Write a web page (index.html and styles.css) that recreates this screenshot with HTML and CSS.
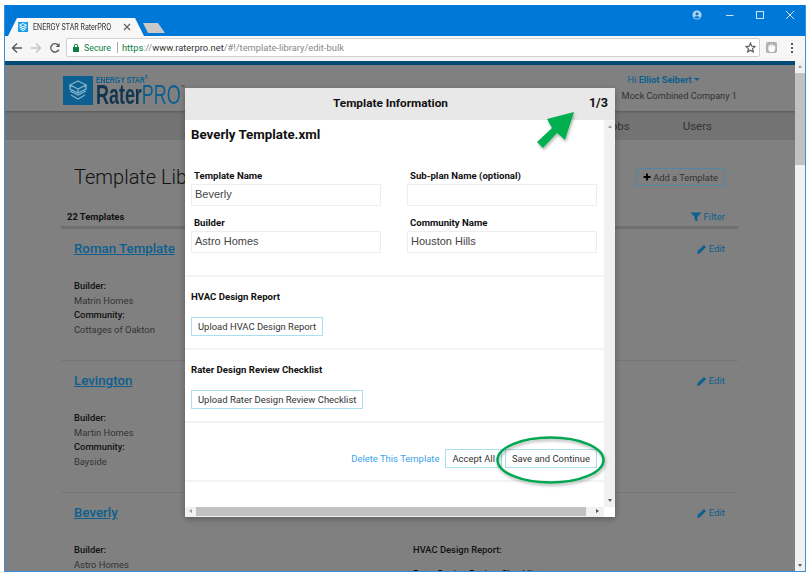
FILE: index.html
```html
<!DOCTYPE html>
<html lang="en">

<head>
    <meta charset="UTF-8">
    <meta name="viewport" content="width=device-width, initial-scale=1.0">
    <title>ENERGY STAR RaterPRO</title>
    <link rel="stylesheet" href="styles.css">
</head>

<body>
    <div class="window">
        <div class="titlebar">
            <div class="tab">
                <span class="favicon">
                    <svg width="10" height="10" viewBox="0 0 10 10"><path d="M5 1.5 8.5 3.2 5 5 1.5 3.2ZM1.5 5 5 6.8 8.5 5M2.5 7 5 8.6 7.5 7" fill="none" stroke="#fff" stroke-width="1"/></svg>
                </span>
                <span class="tab-title">ENERGY STAR RaterPRO</span>
                <span class="tab-close">
                    <svg width="8" height="8" viewBox="0 0 8 8"><path d="M1 1 7 7M7 1 1 7" stroke="#5f6368" stroke-width="1.2"/></svg>
                </span>
            </div>
            <div class="newtab"></div>
            <div class="win-controls">
                <svg class="win-user" width="10" height="10" viewBox="0 0 10 10"><circle cx="5" cy="5" r="4.5" fill="#b5d6f2"/><circle cx="5" cy="3.8" r="1.6" fill="#0078d7"/><path d="M2 7.6C3 5.9 7 5.9 8 7.6 7 9 3 9 2 7.6Z" fill="#0078d7"/></svg>
                <svg class="win-btn" width="10" height="10" viewBox="0 0 10 10"><path d="M1 5.5H8.5" stroke="#cfe5f7" stroke-width="1"/></svg>
                <svg class="win-btn" width="10" height="10" viewBox="0 0 10 10"><rect x="1.5" y="1.5" width="7" height="7" fill="none" stroke="#cfe5f7" stroke-width="1"/></svg>
                <svg class="win-btn" width="10" height="10" viewBox="0 0 10 10"><path d="M1 1 9 9M9 1 1 9" stroke="#cfe5f7" stroke-width="1"/></svg>
            </div>
        </div>

        <div class="toolbar">
            <svg class="nav-icon" width="12" height="12" viewBox="0 0 12 12"><path d="M11 6H2M6 1.5 1.5 6 6 10.5" fill="none" stroke="#5a5a5a" stroke-width="1.4"/></svg>
            <svg class="nav-icon" width="12" height="12" viewBox="0 0 12 12"><path d="M1 6H10M6 1.5 10.5 6 6 10.5" fill="none" stroke="#c4c4c4" stroke-width="1.4"/></svg>
            <svg class="nav-icon" width="12" height="12" viewBox="0 0 12 12"><path d="M9.8 7.6A4.2 4.2 0 1 1 9.4 3.4" fill="none" stroke="#5a5a5a" stroke-width="1.4"/><path d="M10.6 1V5H6.6Z" fill="#5a5a5a"/></svg>
            <div class="omnibox">
                <svg width="8" height="10" viewBox="0 0 8 10"><rect x="1" y="4" width="6" height="5" fill="#0b8043"/><path d="M2.3 4V3A1.7 1.7 0 0 1 5.7 3V4" fill="none" stroke="#0b8043" stroke-width="1"/></svg>
                <span class="secure">Secure</span>
                <span class="omni-sep"></span>
                <span class="url"><span class="url-https">https</span>://<span class="url-host">www.raterpro.net</span>/#!/template-library/edit-bulk</span>
                <svg class="omni-star" width="11" height="11" viewBox="0 0 12 12"><path d="M6 1.2 7.4 4.5 11 4.8 8.3 7.2 9.1 10.8 6 8.9 2.9 10.8 3.7 7.2 1 4.8 4.6 4.5Z" fill="none" stroke="#555" stroke-width="1.2"/></svg>
            </div>
            <span class="ext-icon">
                <svg width="8" height="9" viewBox="0 0 8 9"><path d="M1 4V2.5M2.6 4V1.5M4.2 4V1.5M5.8 4V2.3M1 4V6.5Q1 8.5 3.5 8.5 6.6 8.5 6.6 5.5V3" fill="#fff" stroke="#fff" stroke-width="1.2"/></svg>
            </span>
            <span class="menu-dots"><i></i><i></i><i></i></span>
        </div>

        <div class="viewport">
            <div class="page">
                <div class="page-stripe"></div>
                <div class="page-head">
                    <div class="logo">
                        <span class="logo-mark">
                            <svg width="30" height="29" viewBox="0 0 30 29"><path d="M15 5 23 9 15 13 7 9ZM7 9V13L15 17 23 13V9M7 15 15 19 23 15M8 19 15 23 22 19M15 13V17" fill="none" stroke="#7fb2cc" stroke-width="1.3"/></svg>
                        </span>
                        <span class="logo-text">
                            <span class="logo-small">ENERGY STAR<sup>®</sup></span>
                            <span class="logo-big">Rater<span class="logo-pro">PRO</span><sup>™</sup></span>
                        </span>
                    </div>
                    <div class="account">
                        <div class="account-name">Hi <b>Elliot Seibert</b><span class="caret"></span></div>
                        <div class="account-company">Mock Combined Company 1</div>
                    </div>
                </div>

                <div class="page-nav">
                    <span>Jobs</span>
                    <span>Users</span>
                </div>

                <div class="page-main">
                    <div class="title-row">
                        <h1>Template Library</h1>
                        <span class="add-btn">
                            <svg width="8" height="8" viewBox="0 0 8 8"><path d="M4 .5V7.5M.5 4H7.5" stroke="#000" stroke-width="1.8"/></svg>
                            Add a Template
                        </span>
                    </div>
                    <div class="count-row">
                        <b>22 Templates</b>
                        <span class="link-blue">
                            <svg width="12" height="10" viewBox="0 0 12 10"><path d="M.5 .5H11.5L7.3 5V9.5L4.7 8V5Z" fill="#0c5f8f"/></svg>
                            Filter
                        </span>
                    </div>

                    <div class="tpl">
                        <div class="tpl-head">
                            <a class="tpl-name">Roman Template</a>
                            <span class="link-blue"><svg class="pencil" width="10" height="10" viewBox="0 0 9 9"><path d="M0 9 .6 6.4 6.2 .8 8.2 2.8 2.6 8.4Z" fill="#0c5f8f"/></svg>Edit</span>
                        </div>
                        <div class="tpl-cols">
                            <div>
                                <div class="tpl-label">Builder:</div>
                                <div>Matrin Homes</div>
                                <div class="tpl-label">Community:</div>
                                <div>Cottages of Oakton</div>
                            </div>
                            <div>
                                <div class="tpl-label">HVAC Design Report:</div>
                            </div>
                        </div>
                    </div>

                    <div class="tpl">
                        <div class="tpl-head">
                            <a class="tpl-name">Levington</a>
                            <span class="link-blue"><svg class="pencil" width="10" height="10" viewBox="0 0 9 9"><path d="M0 9 .6 6.4 6.2 .8 8.2 2.8 2.6 8.4Z" fill="#0c5f8f"/></svg>Edit</span>
                        </div>
                        <div class="tpl-cols">
                            <div>
                                <div class="tpl-label">Builder:</div>
                                <div>Martin Homes</div>
                                <div class="tpl-label">Community:</div>
                                <div>Bayside</div>
                            </div>
                            <div>
                                <div class="tpl-label">HVAC Design Report:</div>
                            </div>
                        </div>
                    </div>

                    <div class="tpl">
                        <div class="tpl-head">
                            <a class="tpl-name">Beverly</a>
                            <span class="link-blue"><svg class="pencil" width="10" height="10" viewBox="0 0 9 9"><path d="M0 9 .6 6.4 6.2 .8 8.2 2.8 2.6 8.4Z" fill="#0c5f8f"/></svg>Edit</span>
                        </div>
                        <div class="tpl-cols">
                            <div>
                                <div class="tpl-label">Builder:</div>
                                <div>Astro Homes</div>
                            </div>
                            <div>
                                <div class="tpl-label">HVAC Design Report:</div>
                                <div class="tpl-label tpl-checklist">Rater Design Review Checklist</div>
                            </div>
                        </div>
                    </div>
                </div>

                <div class="modal">
                    <div class="modal-head">
                        <span class="modal-title">Template Information</span>
                        <span class="modal-step">1/3</span>
                    </div>
                    <div class="modal-scroll">
                        <div class="modal-body">
                            <section class="modal-section section-form">
                                <h2>Beverly Template.xml</h2>
                                <div class="form-grid">
                                    <div class="field">
                                        <label>Template Name</label>
                                        <div class="input">Beverly</div>
                                    </div>
                                    <div class="field">
                                        <label>Sub-plan Name (optional)</label>
                                        <div class="input"></div>
                                    </div>
                                    <div class="field">
                                        <label>Builder</label>
                                        <div class="input">Astro Homes</div>
                                    </div>
                                    <div class="field">
                                        <label>Community Name</label>
                                        <div class="input">Houston Hills</div>
                                    </div>
                                </div>
                            </section>
                            <section class="modal-section section-upload">
                                <h3>HVAC Design Report</h3>
                                <span class="btn">Upload HVAC Design Report</span>
                            </section>
                            <section class="modal-section section-upload">
                                <h3>Rater Design Review Checklist</h3>
                                <span class="btn">Upload Rater Design Review Checklist</span>
                            </section>
                            <section class="modal-section section-actions">
                                <a class="delete-link">Delete This Template</a>
                                <span class="btn">Accept All</span>
                                <span class="btn">Save and Continue</span>
                            </section>
                        </div>
                        <div class="modal-vbar">
                            <span class="arrow-up"></span>
                            <span class="arrow-down"></span>
                        </div>
                    </div>
                    <div class="modal-hbar">
                        <span class="arrow-left"></span>
                        <span class="hbar-thumb"></span>
                        <span class="arrow-right"></span>
                    </div>
                </div>
            </div>

            <div class="vscroll">
                <span class="arrow-up"></span>
                <span class="vscroll-thumb"></span>
                <span class="arrow-down"></span>
            </div>
        </div>
    </div>

    <svg class="annotations" width="810" height="576" viewBox="0 0 810 576">
        <defs>
            <filter id="soft" x="-20%" y="-20%" width="140%" height="140%">
                <feDropShadow dx="1" dy="2" stdDeviation="1.5" flood-color="#000" flood-opacity="0.3"/>
            </filter>
        </defs>
        <path d="M574 112 547 119 552 128 537 142 543 148 557 133 565 140Z" fill="#00b050" filter="url(#soft)"/>
        <ellipse cx="550.5" cy="460" rx="53" ry="22.5" fill="none" stroke="#00a651" stroke-width="2.5" filter="url(#soft)"/>
    </svg>
</body>

</html>
```

FILE: styles.css
```css
:root {
    --chrome-blue: #0078d7;
    --dim-bg: #808080;
    --dim-link: #0c5f8f;
    --dim-text: #333333;
    --btn-border: #a9dff0;
    --rule-color: #f3f3f3;
}

* {
    box-sizing: border-box;
}

body {
    font-family: 'Roboto', sans-serif;
    margin: 0;
    background-color: white;
    color: #222;
    overflow: hidden;
}

.window {
    width: 802px;
    height: 567px;
    margin: 5px 0 0 4px;
    border: 1px solid #3a8fd8;
    border-top: none;
    display: flex;
    flex-direction: column;
    overflow: hidden;
}

/* browser chrome */

.titlebar {
    height: 31px;
    flex: none;
    background-color: var(--chrome-blue);
    display: flex;
    align-items: flex-end;
    padding-left: 3px;
}

.tab {
    width: 136px;
    height: 18px;
    background-color: #f7f7f7;
    clip-path: polygon(0 100%, 9px 0, 127px 0, 100% 100%);
    display: flex;
    align-items: center;
    padding: 0 10px;
}

.favicon {
    width: 10px;
    height: 10px;
    background-color: #18a0e8;
    display: flex;
    flex: none;
}

.tab-title {
    width: 84px;
    font-size: 8.8px;
    color: #333;
    margin-left: 5px;
    white-space: nowrap;
    transform: scaleX(0.81);
    transform-origin: left;
}

.tab-close {
    display: flex;
    margin-left: auto;
    margin-right: 3px;
}

.newtab {
    width: 22px;
    height: 10px;
    margin: 0 0 3px -1px;
    background-color: #c8c8c8;
    clip-path: polygon(0 0, 15px 0, 100% 100%, 5px 100%);
}

.win-controls {
    margin-left: auto;
    align-self: flex-start;
    display: flex;
    align-items: center;
    padding: 5px 10px 0 0;
}

.win-user {
    margin-right: 3px;
}

.win-btn {
    margin-left: 20px;
}

.toolbar {
    height: 25px;
    flex: none;
    background-color: #f6f6f6;
    display: flex;
    align-items: center;
    padding: 0 0 2px 6px;
}

.nav-icon {
    margin-right: 7px;
    flex: none;
}

.omnibox {
    width: 694px;
    height: 19px;
    margin-left: -2px;
    background-color: white;
    border: 1px solid #d0d0d0;
    border-radius: 2px;
    display: flex;
    align-items: center;
    padding-left: 5px;
    font-size: 9.35px;
    color: #888;
}

.secure {
    font-size: 8.8px;
    color: #0b8043;
    margin-left: 4px;
}

.omni-sep {
    width: 1px;
    height: 11px;
    background-color: #aaa;
    margin: 0 4px 0 6px;
}

.url-https {
    color: #0b8043;
}

.url-host {
    color: #333;
}

.omni-star {
    margin-left: auto;
    margin-right: 3px;
}

.ext-icon {
    width: 11px;
    height: 11px;
    margin-left: 6px;
    background-color: #b0b0b0;
    border-radius: 2px;
    display: flex;
    align-items: center;
    justify-content: center;
}

.menu-dots {
    display: flex;
    flex-direction: column;
    gap: 2px;
    margin-left: 14px;
}

.menu-dots i {
    width: 2px;
    height: 2px;
    background-color: #5a5a5a;
}

.viewport {
    flex: 1;
    display: flex;
    min-height: 0;
}

/* page behind the dialog, colours already dimmed */

.page {
    flex: 1;
    position: relative;
    overflow: hidden;
    background-color: var(--dim-bg);
    color: var(--dim-text);
}

.page-stripe {
    height: 4px;
    background-color: #004a75;
}

.page-head {
    height: 46px;
    display: flex;
    padding: 11px 58px 0 58px;
    background-color: var(--dim-bg);
    box-shadow: 0 1px 2px rgba(0, 0, 0, 0.25);
    position: relative;
}

.logo {
    display: flex;
    height: 29px;
}

.logo-mark {
    width: 30px;
    height: 29px;
    background-color: var(--dim-link);
    display: flex;
}

.logo-text {
    display: flex;
    flex-direction: column;
    margin-left: 3px;
    font-family: 'Liberation Sans', sans-serif;
    font-weight: bold;
}

.logo-small {
    font-size: 8.4px;
    line-height: 8px;
    color: var(--dim-link);
    transform: scaleX(0.82);
    transform-origin: left;
    white-space: nowrap;
}

.logo-small sup {
    font-size: 5px;
    line-height: 0;
}

.logo-big {
    font-size: 28px;
    line-height: 22px;
    color: #12354f;
    transform: scaleX(0.64);
    transform-origin: left;
    white-space: nowrap;
}

.logo-big sup {
    font-size: 6px;
    font-weight: normal;
    line-height: 0;
    vertical-align: 15px;
    color: #333;
}

.logo-pro {
    font-weight: normal;
    color: var(--dim-link);
}

.account {
    margin: -2px 0 0 auto;
    font-size: 9.2px;
}

.account-name {
    color: var(--dim-link);
    padding-left: 6px;
    line-height: 12px;
}

.caret {
    display: inline-block;
    border: 3px solid transparent;
    border-top: 3px solid var(--dim-link);
    margin: 0 0 -1px 2px;
}

.account-company {
    line-height: 12px;
    margin-top: 4px;
}

.page-nav {
    height: 29px;
    background-color: #737373;
    display: flex;
    align-items: center;
    justify-content: flex-end;
    gap: 53px;
    padding-right: 83px;
    font-size: 11.5px;
}

.page-main {
    padding: 23px 57px 0 56px;
    font-size: 9.4px;
}

.title-row {
    height: 28px;
    display: flex;
    align-items: center;
    justify-content: space-between;
    padding: 0 13px;
}

h1 {
    margin: 0;
    font-size: 20px;
    font-weight: 300;
    color: #111;
}

.add-btn {
    height: 18px;
    width: 89px;
    border: 1px solid #4f87a8;
    border-radius: 2px;
    font-size: 9.3px;
    display: flex;
    align-items: center;
    justify-content: center;
    gap: 2px;
}

.count-row {
    height: 38px;
    display: flex;
    justify-content: space-between;
    align-items: flex-start;
    padding: 18px 13px 0 6px;
    line-height: 16px;
    border-bottom: 3px solid #707070;
    color: #111;
}

.link-blue {
    color: var(--dim-link);
    font-size: 9.6px;
    display: inline-flex;
    align-items: center;
    gap: 2px;
}

.tpl {
    height: 132px;
    padding: 12px 13px 0;
    border-bottom: 1px solid #767676;
    line-height: 14.5px;
}

.tpl-head {
    height: 16px;
    display: flex;
    justify-content: space-between;
    align-items: center;
}

.tpl-name {
    font-size: 13.3px;
    font-weight: 500;
    color: var(--dim-link);
    text-decoration: underline;
}

.tpl-cols {
    display: grid;
    grid-template-columns: 339px 1fr;
    margin-top: 22px;
}

.tpl-label {
    font-weight: 500;
    color: #111;
}

.tpl-checklist {
    margin-top: 9px;
}

/* dialog */

.modal {
    position: absolute;
    left: 180px;
    top: 27px;
    width: 430px;
    height: 429px;
    background-color: white;
    display: flex;
    flex-direction: column;
    box-shadow: 0 2px 6px rgba(0, 0, 0, 0.3);
}

.modal-head {
    height: 32px;
    flex: none;
    background-color: #e8e8e8;
    display: flex;
    align-items: center;
    padding: 0 7px 3px 148px;
    color: #111;
}

.modal-title {
    font-size: 11.8px;
    font-weight: 700;
}

.modal-step {
    margin-left: auto;
    font-size: 12.6px;
    font-weight: 700;
}

.modal-scroll {
    flex: 1;
    display: flex;
    min-height: 0;
}

.modal-body {
    flex: 1;
    overflow: hidden;
}

.modal-section {
    border-bottom: 2px solid var(--rule-color);
    padding-left: 6px;
    padding-right: 7px;
}

.section-form {
    height: 157px;
    padding-top: 7px;
}

h2 {
    margin: 0;
    font-size: 13.3px;
    line-height: 16px;
    font-weight: 700;
    color: #111;
}

.form-grid {
    display: grid;
    grid-template-columns: 190px 190px;
    column-gap: 26px;
    row-gap: 11px;
    margin-top: 27px;
}

.field label {
    display: block;
    font-size: 9.6px;
    font-weight: 700;
    line-height: 12px;
    padding-left: 3px;
    margin-bottom: 2px;
    color: #111;
}

.input {
    height: 22px;
    border: 1px solid #eeeeee;
    padding: 0 3px;
    font-family: 'Liberation Sans', sans-serif;
    font-size: 11px;
    line-height: 19px;
    color: #444;
}

.section-upload {
    height: 73px;
    padding-top: 14px;
}

h3 {
    margin: 0 0 12px;
    font-size: 9.6px;
    line-height: 12px;
    font-weight: 700;
    color: #111;
}

.btn {
    display: inline-block;
    height: 19px;
    line-height: 17px;
    padding: 0 6px;
    border: 1px solid var(--btn-border);
    font-size: 9.45px;
    color: #333;
    background-color: white;
    white-space: nowrap;
}

.section-actions {
    height: 59px;
    display: flex;
    justify-content: flex-end;
    align-items: center;
    gap: 3px;
    padding-top: 14px;
}

.delete-link {
    font-size: 9.45px;
    color: #3aa3ee;
    margin-right: 3px;
}

.modal-vbar {
    width: 11px;
    flex: none;
    background-color: #f1f1f1;
    display: flex;
    flex-direction: column;
    justify-content: space-between;
    align-items: center;
    padding: 5px 0;
}

.modal-hbar {
    height: 10px;
    flex: none;
    background-color: #f1f1f1;
    margin-right: 11px;
    display: flex;
    align-items: flex-start;
    justify-content: space-between;
    padding: 0 5px 0 4px;
}

.hbar-thumb {
    width: 390px;
    height: 9px;
    margin-right: 6px;
    background-color: #c1c1c1;
}

.arrow-left,
.arrow-right {
    margin-top: 2px;
}

.vscroll {
    width: 10px;
    flex: none;
    background-color: #f1f1f1;
    display: flex;
    flex-direction: column;
    align-items: center;
    padding: 4px 0;
}

.vscroll-thumb {
    width: 10px;
    height: 92px;
    margin-top: 5px;
    background-color: #c1c1c1;
}

.vscroll .arrow-down {
    margin-top: auto;
}

/* small scrollbar triangles */

.arrow-up,
.arrow-down {
    width: 0;
    height: 0;
    border-left: 2.5px solid transparent;
    border-right: 2.5px solid transparent;
}

.arrow-up {
    border-bottom: 3px solid #a0a0a0;
}

.arrow-down {
    border-top: 3px solid #606060;
}

.arrow-left,
.arrow-right {
    width: 0;
    height: 0;
    border-top: 2.5px solid transparent;
    border-bottom: 2.5px solid transparent;
}

.arrow-left {
    border-right: 3px solid #a0a0a0;
}

.arrow-right {
    border-left: 3px solid #505050;
}

.annotations {
    position: absolute;
    top: 0;
    left: 0;
    pointer-events: none;
}
```
